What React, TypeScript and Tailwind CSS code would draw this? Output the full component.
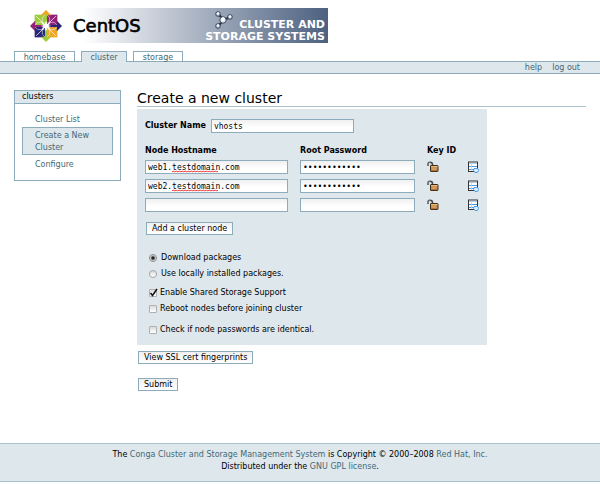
import { useState } from "react";
import type { InputHTMLAttributes, ReactNode } from "react";

const link = "text-[#436976] hover:underline";

function CentosMark() {
  return (
    <svg viewBox="0 0 62 62" className="mt-[2px] size-8 shrink-0" aria-hidden="true">
      <rect x="9" y="9" width="21" height="21" fill="#9fcb3b" />
      <rect x="32" y="9" width="21" height="21" fill="#932178" />
      <rect x="9" y="32" width="21" height="21" fill="#262577" />
      <rect x="32" y="32" width="21" height="21" fill="#efa724" />
      <path d="M31 0l10 10H21z" fill="#efa724" />
      <path d="M62 31L52 41V21z" fill="#262577" />
      <path d="M31 62L21 52h20z" fill="#9fcb3b" />
      <path d="M0 31l10-10v20z" fill="#932178" />
      <path d="M12 12l38 38M50 12L12 50" stroke="#fff" strokeWidth="1.4" />
      <path
        d="M24 28V15l7-7 7 7v13M34 24h13l7 7-7 7H34M38 34v13l-7 7-7-7V34M28 38H15l-7-7 7-7h13"
        fill="none"
        stroke="#fff"
        strokeWidth="1"
      />
      <path d="M31 4v24" stroke="#9fcb3b" strokeWidth="4" />
      <path d="M31 34v24" stroke="#9fcb3b" strokeWidth="4" />
      <path d="M4 31h24" stroke="#932178" strokeWidth="4" />
      <path d="M34 31h24" stroke="#262577" strokeWidth="4" />
      <path d="M31 0l6 9H25z" fill="#efa724" />
      <path d="M31 21l2.500 6 5.500-3-3 5.500 5 1.500-5 1.500 3 5.500-5.500-3L31 41l-2.500-6-5.500 3 3-5.500-5-1.500 5-1.500-3-5.500 5.500 3z" fill="#fff" />
    </svg>
  );
}

function ClusterMark() {
  return (
    <svg viewBox="0 0 18 19" className="absolute left-[145px] top-[2px] h-[19px] w-[18px]" aria-hidden="true">
      <path d="M3 4l6 6 6-3M9 10l-6 6" stroke="#27303f" strokeWidth="2" fill="none" />
      <g stroke="#3a475c" strokeWidth="1">
        <circle cx="3" cy="4" r="2.3" fill="#b9c4d2" />
        <circle cx="15" cy="7" r="2.3" fill="#b9c4d2" />
        <circle cx="3" cy="16" r="2.3" fill="#b9c4d2" />
        <circle cx="8" cy="10" r="3.2" fill="#e4ebf5" />
      </g>
      <g fill="#fff">
        <circle cx="3" cy="3.500" r="1.200" />
        <circle cx="15" cy="6.500" r="1.200" />
        <circle cx="3" cy="15.500" r="1.200" />
        <circle cx="8" cy="9" r="1.700" />
      </g>
    </svg>
  );
}

function LockIcon() {
  return (
    <svg viewBox="0 0 12 12" className="block size-3" role="img" aria-label="Unlocked">
      <path d="M1 5V3.200C1 1.800 2 1.200 3 1.200s2.500.8 2.500 2.300V5" fill="none" stroke="#4a4a4a" strokeWidth="1.600" />
      <path d="M1 4.500V3.200C1 2 2 1.600 3 1.600" fill="none" stroke="#bbb" strokeWidth=".6" />
      <rect x="3.500" y="4.500" width="7.500" height="6" rx=".5" fill="#c98f52" stroke="#3f2c17" strokeWidth="1" />
      <path d="M4 5.600h6.500" stroke="#ecc58c" strokeWidth=".9" />
      <path d="M5 8h4" stroke="#e0b070" strokeWidth=".8" />
      <path d="M4 9.700h6.500" stroke="#9b642c" strokeWidth=".7" />
    </svg>
  );
}

function SheetIcon() {
  return (
    <svg viewBox="0 0 11 12" className="block h-3 w-[11px]" role="img" aria-label="Key details">
      <rect x=".5" y="1" width="9" height="9.500" fill="#fff" stroke="#333" />
      <path d="M1 2.500h8" stroke="#b5cde2" />
      <path d="M1 5.500h8M1 8.500h5" stroke="#4b9ae0" />
      <path d="M3.500 2v8" stroke="#b7d6f2" strokeWidth=".8" />
      <path d="M6 7.500h3.500l1.300 1.800-1.500 2.200H7L5.500 9.600z" fill="#d7ecff" stroke="#3d94e6" strokeWidth=".9" />
    </svg>
  );
}

function Field({ className = "", ...rest }: InputHTMLAttributes<HTMLInputElement>) {
  return (
    <input
      {...rest}
      spellCheck={false}
      className={`block h-[14px] border border-[#8cacbb] bg-linear-to-b from-[#f0f0f0] to-white to-60% px-[2px] font-['DejaVu_Sans_Mono',monospace] text-[8px] leading-[12px] text-black outline-none ${className}`}
    />
  );
}

function SpellingMark() {
  return (
    <svg className="pointer-events-none absolute left-[27px] top-[10px] h-[3px] w-[48px]" aria-hidden="true">
      <path
        d="M0 2l1-1 2 1 1-1 2 1 1-1 2 1 1-1 2 1 1-1 2 1 1-1 2 1 1-1 2 1 1-1 2 1 1-1 2 1 1-1 2 1 1-1 2 1 1-1 2 1 1-1 2 1 1-1 2 1 1-1 2 1 1-1"
        fill="none"
        stroke="#f03030"
        strokeWidth=".9"
      />
    </svg>
  );
}

type ButtonProps = { children: ReactNode; type?: "button" | "submit"; onClick?: () => void };

function Button({ children, type = "button", onClick }: ButtonProps) {
  return (
    <button
      type={type}
      onClick={onClick}
      className="block h-[13px] border border-[#8cacbb] bg-linear-to-b from-[#f0f0f0] to-white px-[5px] text-[8px] leading-[11px] text-black"
    >
      {children}
    </button>
  );
}

function Radio({ label, ...rest }: { label: string } & InputHTMLAttributes<HTMLInputElement>) {
  return (
    <label className="flex h-4 items-center gap-1">
      <input
        type="radio"
        name="packages"
        {...rest}
        className="size-2 appearance-none rounded-full border border-[#a5a5a5] bg-linear-to-b from-[#dcdcdc] to-white checked:border-[#888] checked:bg-[radial-gradient(circle,#222_0_1px,#999_2px,#f0f0f0_3px)]"
      />
      {label}
    </label>
  );
}

function Check({ label, ...rest }: { label: string } & InputHTMLAttributes<HTMLInputElement>) {
  return (
    <label className="flex h-4 items-center gap-[3px]">
      <span className="relative size-2">
        <input
          type="checkbox"
          {...rest}
          className="peer block size-2 appearance-none rounded-[1px] border border-[#b0b0b0] bg-linear-to-b from-[#dcdcdc] to-white"
        />
        <svg
          viewBox="0 0 8 8"
          className="pointer-events-none absolute inset-0 hidden size-2 overflow-visible peer-checked:block"
          aria-hidden="true"
        >
          <path d="M1.500 4l2 2.500L8 0" fill="none" stroke="#111" strokeWidth="1.500" />
        </svg>
      </span>
      {label}
    </label>
  );
}

const tabs = [
  { name: "homebase", width: "w-[61px]" },
  { name: "cluster", width: "w-[46px]" },
  { name: "storage", width: "w-[50px]" },
];

const nodes = [
  { host: "web1.testdomain.com", password: "clusterpass1" },
  { host: "web2.testdomain.com", password: "clusterpass2" },
  { host: "", password: "" },
];

export default function App() {
  const [rows, setRows] = useState(nodes);

  return (
    <div className="min-h-screen bg-white font-['DejaVu_Sans',sans-serif] text-[8px] leading-[12px] text-black">
      <header>
        <div className="flex items-start gap-2 pl-[30px] pt-2">
          <CentosMark />
          <div className="relative flex h-[35px] w-[258px] items-center justify-between bg-linear-to-r from-white from-5% via-[#a9b3c2] via-50% to-[#4d6180] px-[3px]">
            <span className="text-[18px] leading-[24px] [-webkit-text-stroke:0.6px_black]">CentOS</span>
            <ClusterMark />
            <span className="pt-[11px] text-right text-[11px] font-bold leading-[12px] text-white">
              CLUSTER AND
              <br />
              STORAGE SYSTEMS
            </span>
          </div>
        </div>

        <nav className="mt-2 flex gap-[6px] pl-[14px]">
          {tabs.map((tab) => (
            <a
              key={tab.name}
              href={`#${tab.name}`}
              className={`border border-b-0 border-[#8cacbb] text-center leading-[11px] text-[#436976] ${tab.width} ${
                tab.name === "cluster" ? "relative -mb-px h-[11px] bg-[#dee7ec]" : "h-[10px]"
              }`}
            >
              {tab.name}
            </a>
          ))}
        </nav>
        <div className="flex h-[13px] items-center justify-end gap-[10px] border-y border-[#8cacbb] bg-[#dee7ec] pr-5">
          <a href="#help" className={link}>help</a>
          <a href="#logout" className={link}>log out</a>
        </div>
      </header>

      <div className="flex items-start gap-4 px-[14px] pt-4">
        <aside className="w-[107px] shrink-0 border border-[#8cacbb]">
          <h2 className="border-b border-[#8cacbb] bg-[#dee7ec] pl-[7px] leading-[12px]">clusters</h2>
          <ul className="px-[7px] pb-[9px] pt-[10px]">
            <li className="px-[13px] pb-px">
              <a href="#list" className={`block ${link}`}>Cluster List</a>
            </li>
            <li className="border border-[#8cacbb] bg-[#dee7ec] px-3 pt-[2px]">
              <a href="#create" className={`block ${link}`}>Create a New Cluster</a>
            </li>
            <li className="px-[13px] pt-1">
              <a href="#configure" className={`block ${link}`}>Configure</a>
            </li>
          </ul>
        </aside>

        <main className="min-w-0 flex-1">
          <h1 className="border-b border-[#a9c2ce] text-[14px] leading-[16px]">Create a new cluster</h1>
          <form onSubmit={(e) => e.preventDefault()}>
            <div className="mt-[2px] max-w-[350px] bg-[#dee7ec] px-2 pb-[7px] pt-[10px]">
              <div className="flex items-center gap-[5px]">
                <label htmlFor="cluster-name" className="font-bold">Cluster Name</label>
                <Field id="cluster-name" defaultValue="vhosts" className="w-[143px]" />
              </div>

              <table className="mt-3 border-collapse text-left">
                <thead>
                  <tr className="h-[15px] align-top">
                    <th className="w-[155px] p-0 font-bold">Node Hostname</th>
                    <th className="w-[127px] p-0 font-bold">Root Password</th>
                    <th colSpan={2} className="p-0 font-bold">Key ID</th>
                  </tr>
                </thead>
                <tbody>
                  {rows.map((node, i) => (
                    <tr key={i} className="h-[19px] align-top">
                      <td className="p-0">
                        <div className="relative">
                          <Field aria-label={`Node ${i + 1} hostname`} defaultValue={node.host} className="w-[143px]" />
                          {node.host && <SpellingMark />}
                        </div>
                      </td>
                      <td className="p-0">
                        <Field
                          type="password"
                          aria-label={`Node ${i + 1} root password`}
                          defaultValue={node.password}
                          className="w-[115px]"
                        />
                      </td>
                      <td className="w-[41px] p-0 pt-px"><LockIcon /></td>
                      <td className="p-0 pt-px"><SheetIcon /></td>
                    </tr>
                  ))}
                </tbody>
              </table>

              <div className="ml-px mt-[5px]">
                <Button onClick={() => setRows([...rows, { host: "", password: "" }])}>Add a cluster node</Button>
              </div>

              <div className="ml-1 mt-[15px]">
                <Radio label="Download packages" defaultChecked />
                <Radio label="Use locally installed packages." />
              </div>
              <div className="ml-1 mt-[3px]">
                <Check label="Enable Shared Storage Support" defaultChecked />
                <Check label="Reboot nodes before joining cluster" />
              </div>
              <div className="ml-1 mt-[5px]">
                <Check label="Check if node passwords are identical." />
              </div>
            </div>

            <div className="ml-px mt-[6px] flex flex-col items-start gap-[14px]">
              <Button>View SSL cert fingerprints</Button>
              <Button type="submit">Submit</Button>
            </div>
          </form>
        </main>
      </div>

      <footer className="mt-[52px] border-y border-[#a9c2ce] bg-[#dee7ec] pb-2 pt-[5px] text-center leading-[12px]">
        <p>
          The <a href="#conga" className={link}>Conga Cluster and Storage Management System</a> is Copyright © 2000–2008{" "}
          <a href="#redhat" className={link}>Red Hat, Inc.</a>
        </p>
        <p>
          Distributed under the <a href="#gpl" className={link}>GNU GPL license</a>.
        </p>
      </footer>
    </div>
  );
}
